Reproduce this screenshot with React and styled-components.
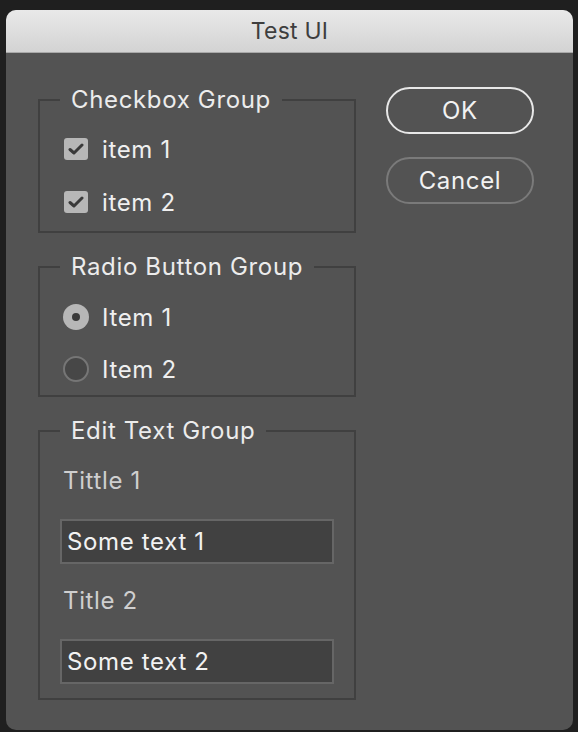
import styled, { createGlobalStyle } from 'styled-components'

const GlobalStyle = createGlobalStyle`
  html, body {
    margin: 0;
    background: #1f1f1f;
    font-family: Inter, "Liberation Sans", Arial, sans-serif;
  }
`

const Window = styled.div`
  width: 567px;
  height: 720px;
  margin: 10px 0 0 6px;
  border-radius: 10px;
  overflow: hidden;
  background: #535353;
  display: flex;
  flex-direction: column;
  letter-spacing: 0.65px;
`

const TitleBar = styled.div`
  height: 42px;
  flex: none;
  display: flex;
  align-items: center;
  justify-content: center;
  background: linear-gradient(#e9e9e9, #d3d3d3);
  border-bottom: 1px solid #a9a9a9;
  color: #3e3e3e;
  font-size: 23px;
  letter-spacing: 0.2px;
`

const Body = styled.div`
  display: flex;
  gap: 30px;
  padding: 34px 40px 0 32px;
`

const Column = styled.div`
  width: 318px;
  display: flex;
  flex-direction: column;
  gap: 21px;
`

const Group = styled.fieldset`
  margin: 0;
  border: 2px solid #404040;
  padding: ${p => p.$pad || '23px 24px 16px'};
  display: flex;
  flex-direction: column;
  gap: ${p => p.$gap || '27px'};
  min-width: 0;
`

const Legend = styled.legend`
  margin-left: ${p => p.$shift || '-4px'};
  padding: 0 11px;
  font-size: 24px;
  line-height: 26px;
  color: #ececec;
`

const Row = styled.label`
  display: flex;
  align-items: center;
  gap: 14px;
  height: 26px;
  font-size: 24px;
  color: #efefef;
`

const Box = styled.span`
  width: 24px;
  height: 22px;
  border-radius: 3px;
  background: #b7b7b7;
  display: flex;
  align-items: center;
  justify-content: center;
`

const Radio = styled.span`
  box-sizing: border-box;
  width: 26px;
  height: 26px;
  margin-left: -1px;
  margin-right: -1px;
  border-radius: 50%;
  display: flex;
  align-items: center;
  justify-content: center;
  background: ${p => (p.$on ? '#b7b7b7' : '#474747')};
  border: ${p => (p.$on ? 'none' : '2px solid #767676')};

  &::after {
    content: '';
    display: ${p => (p.$on ? 'block' : 'none')};
    width: 8px;
    height: 8px;
    border-radius: 50%;
    background: #3a3a3a;
  }
`

const FieldLabel = styled.div`
  font-size: 24px;
  line-height: 26px;
  color: #cfcfcf;
  padding-left: 3px;
`

const TextBox = styled.div`
  box-sizing: border-box;
  height: 45px;
  width: 274px;
  padding: 0 5px;
  display: flex;
  align-items: center;
  background: #414141;
  border: 2px solid #666666;
  color: #f2f2f2;
  font-size: 24px;
`

const Buttons = styled.div`
  display: flex;
  flex-direction: column;
  gap: 23px;
`

const Button = styled.button`
  box-sizing: border-box;
  width: 148px;
  height: 47px;
  border-radius: 24px;
  background: transparent;
  border: 2px solid ${p => (p.$primary ? '#e8e8e8' : '#7a7a7a')};
  color: #f2f2f2;
  font-family: inherit;
  font-size: 24px;
  letter-spacing: inherit;
  padding: 0;
`

const Check = () => (
  <svg width="16" height="14" viewBox="0 0 16 14">
    <path d="M2 7.5 L6 11 L14 3" fill="none" stroke="#3a3a3a" strokeWidth="3" strokeLinecap="round" strokeLinejoin="round" />
  </svg>
)

export default function App() {
  return (
    <>
      <GlobalStyle />
      <Window>
        <TitleBar>Test UI</TitleBar>
        <Body>
          <Column>
            <Group>
              <Legend>Checkbox Group</Legend>
              <Row><Box><Check /></Box>item 1</Row>
              <Row><Box><Check /></Box>item 2</Row>
            </Group>
            <Group $pad="24px 24px 13px" $gap="26px">
              <Legend>Radio Button Group</Legend>
              <Row><Radio $on />Item 1</Row>
              <Row><Radio />Item 2</Row>
            </Group>
            <Group $pad="24px 20px 14px" $gap="24.5px">
              <Legend $shift="0px">Edit Text Group</Legend>
              <FieldLabel>Tittle 1</FieldLabel>
              <TextBox>Some text 1</TextBox>
              <FieldLabel>Title 2</FieldLabel>
              <TextBox>Some text 2</TextBox>
            </Group>
          </Column>
          <Buttons>
            <Button $primary>OK</Button>
            <Button>Cancel</Button>
          </Buttons>
        </Body>
      </Window>
    </>
  )
}
